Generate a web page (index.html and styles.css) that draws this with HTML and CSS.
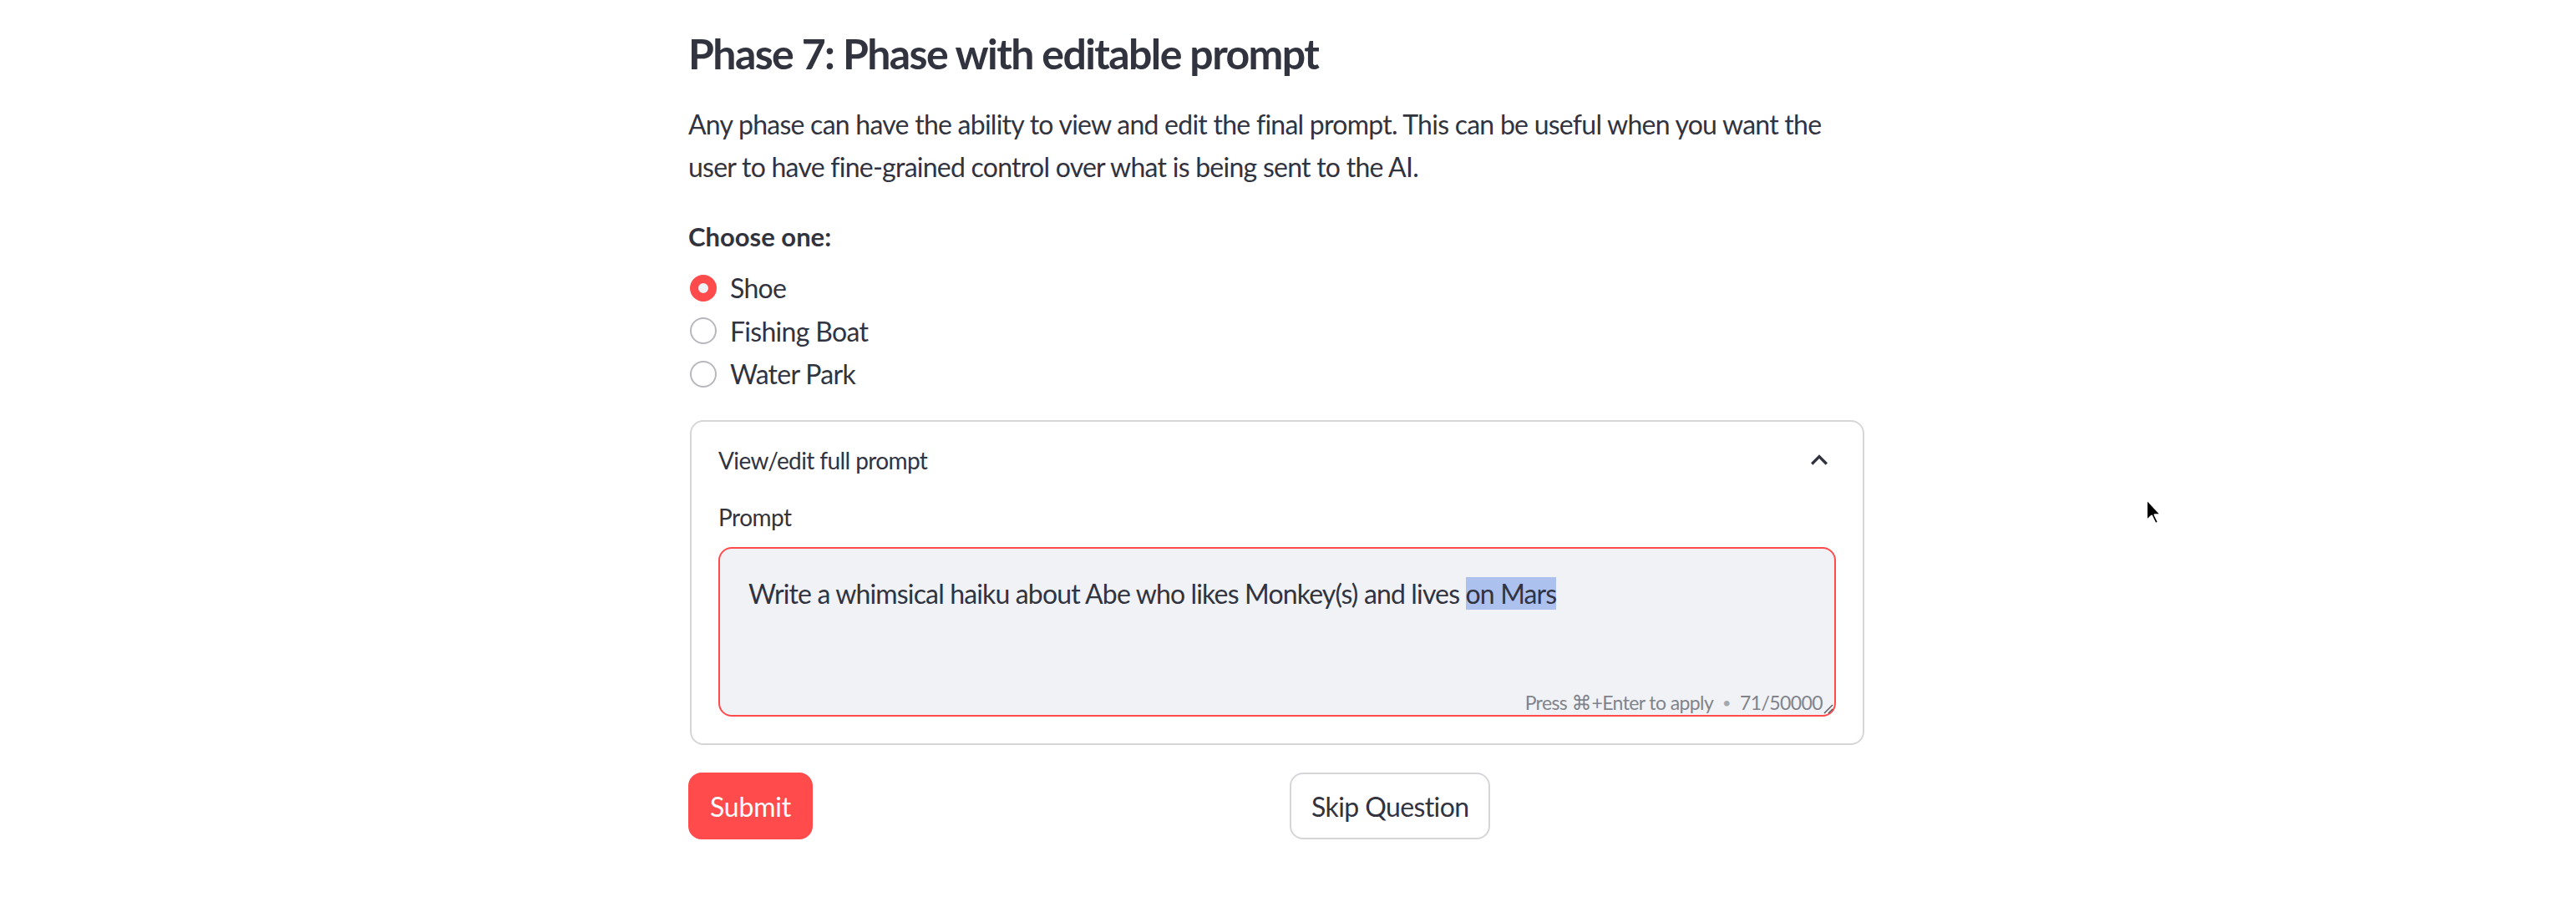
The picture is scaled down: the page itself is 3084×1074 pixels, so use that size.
FILE: index.html
```html
<!DOCTYPE html>
<html>
<head>
<meta charset="utf-8">
<title>Phase 7</title>
<link rel="stylesheet" href="styles.css">
</head>
<body>
<main class="main">
  <h3 class="title">Phase 7: Phase with editable prompt</h3>
  <p class="desc">Any phase can have the ability to view and edit the final prompt. This can be useful when you want the user to have fine-grained control over what is being sent to the AI.</p>
  <div class="radio-group">
    <div class="radio-label">Choose one:</div>
    <div class="radio-row"><span class="radio checked"></span><span class="radio-text">Shoe</span></div>
    <div class="radio-row"><span class="radio"></span><span class="radio-text">Fishing Boat</span></div>
    <div class="radio-row"><span class="radio"></span><span class="radio-text">Water Park</span></div>
  </div>
  <div class="expander">
    <div class="exp-header">
      <span>View/edit full prompt</span>
      <svg class="chevron" viewBox="0 0 24 24" width="40" height="40"><path d="M7.41 15.41L12 10.83l4.59 4.58L18 14l-6-6-6 6z" fill="#31333f"/></svg>
    </div>
    <div class="exp-body">
      <div class="field-label">Prompt</div>
      <div class="textarea">
        <div class="ta-text">Write a whimsical haiku about Abe who likes Monkey(s) and lives <span class="sel">on Mars</span></div>
        <div class="ta-hint">Press <span class="cmd">⌘</span>+Enter to apply <span class="dot">•</span> 71/50000</div>
        <svg class="resize" viewBox="0 0 14 14" width="14" height="14"><path d="M13 3 L3 13 M13 8 L8 13" stroke="#555" stroke-width="1.4" fill="none"/></svg>
      </div>
    </div>
  </div>
  <div class="buttons">
    <div class="col"><button class="btn primary">Submit</button></div>
    <div class="col"><button class="btn secondary">Skip Question</button></div>
  </div>
</main>
<svg class="cursor" viewBox="0 0 22 34" width="22" height="34"><path d="M2 2 L2 27 L8 21.5 L12.5 31 L16 29.5 L11.5 20.3 L19 20.3 Z" fill="#000" stroke="#fff" stroke-width="2" stroke-linejoin="round"/></svg>
</body>
</html>
```
FILE: styles.css
```css
* { box-sizing: border-box; }
html, body { margin: 0; padding: 0; background: #ffffff; }
body {
  font-family: Lato, "Noto Sans", "DejaVu Sans", sans-serif;
  color: #31333f;
  width: 3084px;
  height: 1074px;
  overflow: hidden;
  position: relative;
}
.main {
  width: 1408px;
  margin-left: 824px;
  padding-top: 31px;
}
.title {
  font-size: 50px;
  font-weight: 700;
  letter-spacing: -1.6px;
  line-height: 67px;
  margin: 0;
}
.desc {
  font-size: 32px;
  line-height: 51.2px;
  letter-spacing: -0.75px;
  margin: 25px 0 0;
}
.radio-group {
  margin-top: 36px;
  display: flex;
  flex-direction: column;
}
.radio-label {
  font-size: 31px;
  font-weight: 700;
  line-height: 44.8px;
  margin-bottom: 13px;
}
.radio-row {
  display: flex;
  align-items: center;
  height: 51.4px;
  gap: 16px;
  padding-left: 2px;
}
.radio {
  width: 32px;
  height: 32px;
  border-radius: 50%;
  border: 2px solid #b7b8bd;
  background: #fff;
  flex: none;
}
.radio.checked {
  border: 10px solid #ff4b4b;
  background: #f0f2f6;
}
.radio-text {
  font-size: 32px;
  line-height: 51.2px;
  letter-spacing: -0.7px;
}
.expander {
  margin-top: 30px;
  margin-left: 2px;
  width: 1406px;
  border: 2px solid #d6d6d9;
  border-radius: 16px;
}
.exp-header {
  display: flex;
  align-items: center;
  justify-content: space-between;
  padding: 0 32px;
  height: 92px;
  font-size: 28px;
  line-height: 44.8px;
  letter-spacing: -0.6px;
}
.chevron { display: block; }
.exp-body {
  padding: 0 32px 32px 32px;
}
.field-label {
  font-size: 28px;
  line-height: 44.8px;
  letter-spacing: -0.5px;
  margin-bottom: 13px;
}
.textarea {
  position: relative;
  height: 203px;
  border: 2px solid #ff4b4b;
  border-radius: 16px;
  background: #f0f2f6;
  padding: 32px 32px;
}
.ta-text {
  font-size: 32px;
  line-height: 44.8px;
  letter-spacing: -0.85px;
  padding-left: 2px;
}
.sel { background: #adc1ef; }
.ta-hint {
  position: absolute;
  right: 14px;
  bottom: -3px;
  font-size: 23px;
  line-height: 36px;
  letter-spacing: -0.6px;
  color: #81838b;
}
.cmd { font-size: 24px; letter-spacing: 0; }
.dot { color: #a6a8b0; font-size: 18px; padding: 0 6px; vertical-align: 2px; }
.resize {
  position: absolute;
  right: 1px;
  bottom: 1px;
}
.buttons {
  margin-top: 33px;
  display: grid;
  grid-template-columns: 1fr 1fr;
  gap: 32px;
}
.btn {
  font-family: inherit;
  font-size: 32px;
  letter-spacing: -0.6px;
  height: 80px;
  padding: 0 24px;
  border-radius: 16px;
  cursor: pointer;
}
.primary {
  background: #ff4b4b;
  border: 2px solid #ff4b4b;
  color: #ffffff;
  letter-spacing: -0.2px;
}
.secondary {
  background: #ffffff;
  border: 2px solid #d6d6d9;
  color: #31333f;
}
.cursor {
  position: absolute;
  left: 2568px;
  top: 596px;
}
```
